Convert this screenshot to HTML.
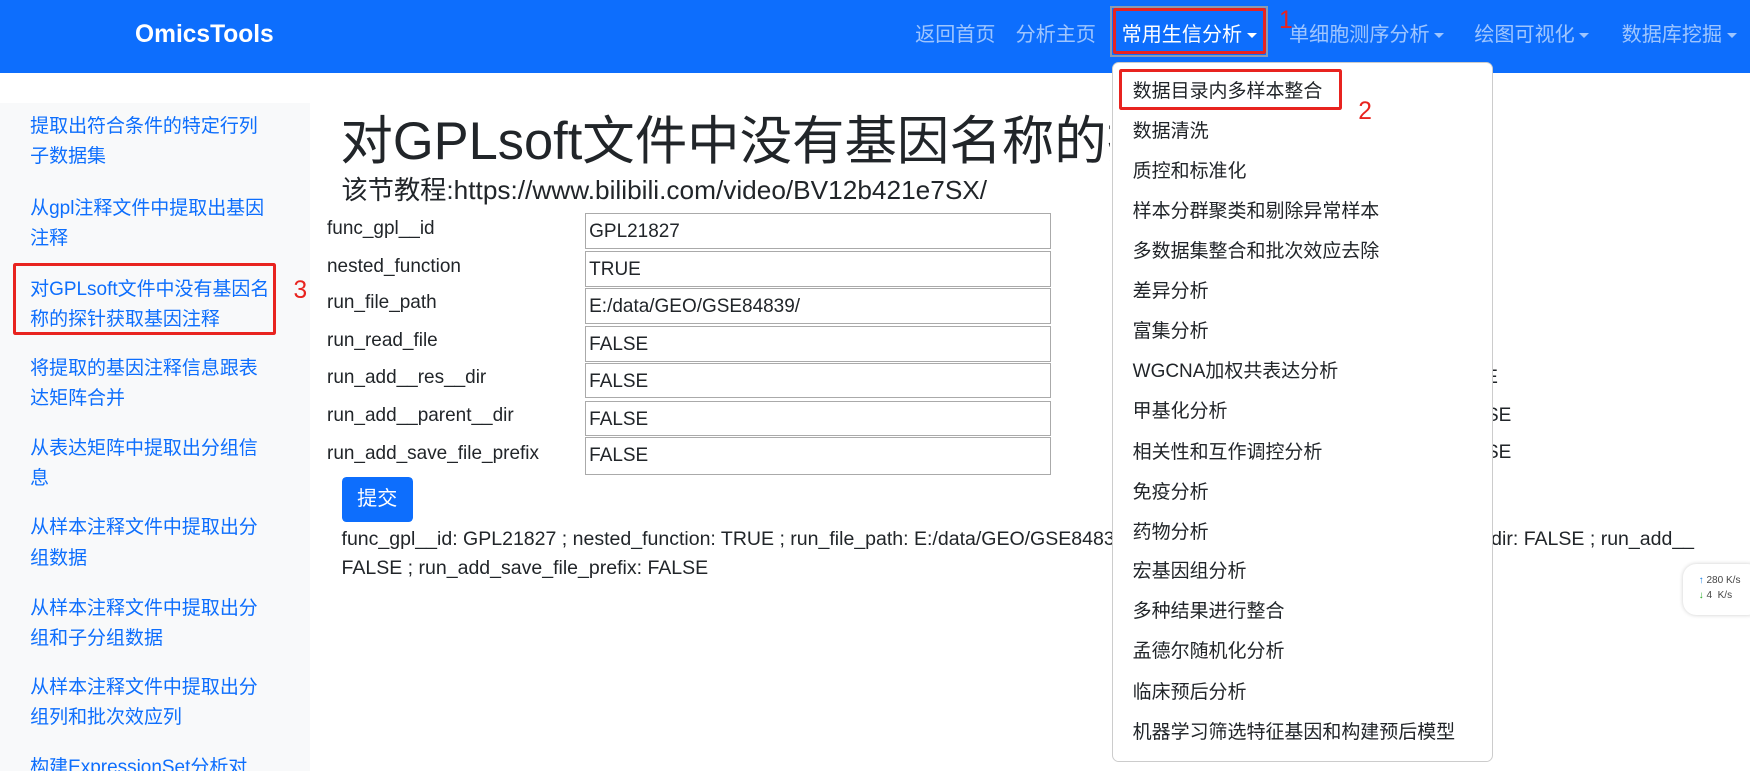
<!DOCTYPE html>
<html><head><meta charset="utf-8"><style>
html,body{margin:0;padding:0;overflow:hidden;background:#fff}
body{width:1568px;height:691px;zoom:1.11607;position:relative;font-family:"Liberation Sans","Noto Sans CJK SC",sans-serif;color:#212529}
.a{position:absolute;white-space:nowrap}
#nav{position:absolute;left:0;top:0;width:1568px;height:65px;background:#0d6efd}
.nl{position:absolute;top:16px;font-size:18px;color:rgba(255,255,255,.6)}
.car{display:inline-block;width:0;height:0;border-left:4.5px solid transparent;border-right:4.5px solid transparent;border-top:5px solid currentColor;vertical-align:middle;margin-left:4px}
#side{position:absolute;left:0;top:92px;width:278px;height:600px;background:#f8f9fa}
.sl{position:absolute;left:27px;font-size:17px;line-height:27px;color:#0d6efd;width:216px;white-space:normal;word-break:break-all}
.lab{position:absolute;left:293px;font-size:17px}
.inp{position:absolute;left:524px;width:418px;height:32px;border:1px solid #aaa;font-size:17px;line-height:32px;padding-left:3px;box-sizing:border-box}
#dd{position:absolute;left:996px;top:56px;width:342px;height:627px;background:#fff;border:1px solid #ccc;border-radius:6px;box-sizing:border-box}
.di{position:absolute;left:18px;font-size:17px;line-height:24px}
.red{position:absolute;border:3px solid #e8231f;border-radius:2px;box-sizing:border-box}
.rn{position:absolute;color:#e8231f;font-size:22px}
</style></head><body>
<div id="nav">
<div class="a" style="left:121px;top:19px;font-size:22px;font-weight:bold;color:#fff">OmicsTools</div>
<div class="nl" style="left:820px">返回首页</div>
<div class="nl" style="left:910px">分析主页</div>
<div class="a" style="left:995px;top:5px;width:141px;height:46px;border:2px solid #8b9bb0;box-sizing:border-box"></div>
<div class="nl" style="left:1005px;color:#fff">常用生信分析<span class="car"></span></div>
<div class="red" style="left:997px;top:7px;width:137px;height:41px"></div>
<div class="rn" style="left:1146px;top:6px">1</div>
<div class="nl" style="left:1155px">单细胞测序分析<span class="car"></span></div>
<div class="nl" style="left:1321px">绘图可视化<span class="car"></span></div>
<div class="nl" style="left:1453px">数据库挖掘<span class="car"></span></div>
</div>
<div id="side">
<div class="sl" style="top:8px">提取出符合条件的特定行列子数据集</div>
<div class="sl" style="top:82px">从gpl注释文件中提取出基因注释</div>
<div class="sl" style="top:154px">对GPLsoft文件中没有基因名称的探针获取基因注释</div>
<div class="sl" style="top:225px">将提取的基因注释信息跟表达矩阵合并</div>
<div class="sl" style="top:297px">从表达矩阵中提取出分组信息</div>
<div class="sl" style="top:368px">从样本注释文件中提取出分组数据</div>
<div class="sl" style="top:440px">从样本注释文件中提取出分组和子分组数据</div>
<div class="sl" style="top:511px">从样本注释文件中提取出分组列和批次效应列</div>
<div class="sl" style="top:583px">构建ExpressionSet分析对</div>
</div>
<div class="red" style="left:12px;top:236px;width:235px;height:64px"></div>
<div class="rn" style="left:263px;top:248px">3</div>
<div class="a" style="left:305px;top:89px;width:690px;overflow:hidden;font-size:47px">对GPLsoft文件中没有基因名称的探针获取基因注释</div>
<div class="a" style="left:306px;top:151px;font-size:23.5px">该节教程:https://www.bilibili.com/video/BV12b421e7SX/</div>
<div class="lab" style="top:195px">func_gpl__id</div><div class="inp" style="top:191px">GPL21827</div>
<div class="lab" style="top:229px">nested_function</div><div class="inp" style="top:225px">TRUE</div>
<div class="lab" style="top:262px">run_file_path</div><div class="inp" style="top:258px">E:/data/GEO/GSE84839/</div>
<div class="lab" style="top:296px">run_read_file</div><div class="inp" style="top:292px">FALSE</div>
<div class="lab" style="top:329px">run_add__res__dir</div><div class="inp" style="top:325px">FALSE</div>
<div class="lab" style="top:363px">run_add__parent__dir</div><div class="inp" style="top:359px">FALSE</div>
<div class="lab" style="top:397px">run_add_save_file_prefix</div><div class="inp" style="top:392px;height:34px">FALSE</div>
<div class="a" style="left:306px;top:427px;width:64px;height:41px;background:#0d6efd;border-radius:4px;color:#fff;font-size:18px;line-height:41px;text-align:center">提交</div>
<div class="a" style="left:306px;top:470px;font-size:17.5px;line-height:26px">func_gpl__id: GPL21827 ; nested_function: TRUE ; run_file_path: E:/data/GEO/GSE84839/ ; run_read_file: FALSE ; run_add__res__dir: FALSE ; run_add__<br>FALSE ; run_add_save_file_prefix: FALSE</div>
<div class="a" style="left:1310px;top:329px;font-size:17px">LSE</div>
<div class="a" style="left:1322px;top:363px;font-size:17px">LSE</div>
<div class="a" style="left:1322px;top:396px;font-size:17px">LSE</div>
<div class="a" style="left:1508px;top:505px;width:70px;height:46px;background:#fff;border-radius:12px;box-shadow:0 0 4px rgba(0,0,0,.2);font-size:9px;line-height:14px;padding:8px 0 0 14px;box-sizing:border-box;color:#444"><span style="color:#1a7fe0">↑</span> 280 K/s<br><span style="color:#2a2">↓</span> 4 &nbsp;K/s</div>
<div id="dd">
<div class="di" style="top:14px">数据目录内多样本整合</div>
<div class="di" style="top:50px">数据清洗</div>
<div class="di" style="top:86px">质控和标准化</div>
<div class="di" style="top:121px">样本分群聚类和剔除异常样本</div>
<div class="di" style="top:157px">多数据集整合和批次效应去除</div>
<div class="di" style="top:193px">差异分析</div>
<div class="di" style="top:229px">富集分析</div>
<div class="di" style="top:265px">WGCNA加权共表达分析</div>
<div class="di" style="top:301px">甲基化分析</div>
<div class="di" style="top:337px">相关性和互作调控分析</div>
<div class="di" style="top:373px">免疫分析</div>
<div class="di" style="top:409px">药物分析</div>
<div class="di" style="top:444px">宏基因组分析</div>
<div class="di" style="top:480px">多种结果进行整合</div>
<div class="di" style="top:516px">孟德尔随机化分析</div>
<div class="di" style="top:552px">临床预后分析</div>
<div class="di" style="top:588px">机器学习筛选特征基因和构建预后模型</div>
</div>
<div class="red" style="left:1003px;top:62px;width:199px;height:37px"></div>
<div class="rn" style="left:1217px;top:88px">2</div>
</body></html>
